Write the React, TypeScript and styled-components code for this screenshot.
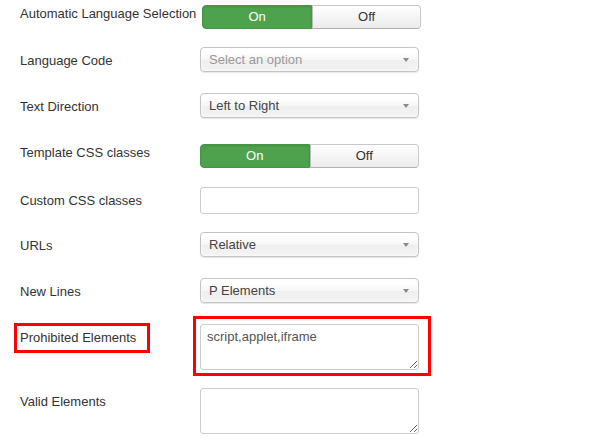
import React from "react";
import styled, { createGlobalStyle } from "styled-components";

const Global = createGlobalStyle`
  html, body { margin: 0; padding: 0; background: #fff; }
  body {
    font-family: "Liberation Sans", Arial, sans-serif;
    font-size: 13px;
    line-height: 18px;
    color: #333;
  }
`;

const Form = styled.div`
  display: flex;
  flex-direction: column;
  padding: 5px 0 0 20px;
`;

const Row = styled.div<{ $mt: number }>`
  display: grid;
  grid-template-columns: minmax(180px, max-content) 219px;
  align-items: start;
  margin-top: ${(p) => p.$mt}px;
`;

const Label = styled.label<{ $toggle?: boolean }>`
  display: block;
  padding-top: ${(p) => (p.$toggle ? 0 : 5)}px;
  padding-right: 6px;
  white-space: nowrap;
  color: #333;
`;

const Highlight = styled.span`
  display: inline-block;
  border: 3px solid #f00;
  padding: 3px 11px 3px 3px;
  margin: -6px 0 -6px -6px;
`;

const Toggle = styled.div`
  display: flex;
  height: 24px;
  width: 219px;
  box-sizing: border-box;
`;

const ToggleBtn = styled.div<{ $active?: boolean; $side: "left" | "right" }>`
  flex: 1;
  display: flex;
  align-items: center;
  justify-content: center;
  box-sizing: border-box;
  font-size: 13px;
  border-radius: ${(p) => (p.$side === "left" ? "4px 0 0 4px" : "0 4px 4px 0")};
  ${(p) =>
    p.$active
      ? `
    color: #fff;
    background: #4ea24e;
    border: 1px solid #459645;
    box-shadow: inset 0 1px 2px rgba(0,0,0,0.12);
  `
      : `
    color: #333;
    background: linear-gradient(#ffffff, #ececec);
    border: 1px solid #c8c8c8;
    border-bottom-color: #b3b3b3;
    border-left-color: #bbb;
  `}
`;

const Select = styled.div<{ $placeholder?: boolean }>`
  position: relative;
  height: 25px;
  box-sizing: border-box;
  border: 1px solid #c4c4c4;
  border-radius: 4px;
  padding: 3px 8px;
  line-height: 18px;
  color: ${(p) => (p.$placeholder ? "#999" : "#444")};
  background: linear-gradient(#ffffff 20%, #f6f6f6 50%, #eeeeee 52%, #f4f4f4 100%);
  box-shadow: inset 0 0 3px #fff, 0 1px 1px rgba(0, 0, 0, 0.1);
`;

const Arrow = styled.svg`
  position: absolute;
  right: 9px;
  top: 10px;
`;

const TextInput = styled.input`
  display: block;
  width: 219px;
  height: 27px;
  box-sizing: border-box;
  border: 1px solid #ccc;
  border-radius: 3px;
  padding: 4px 6px;
  font: inherit;
  color: #555;
  background: #fff;
  outline: none;
`;

const Area = styled.textarea`
  display: block;
  width: 219px;
  height: 46px;
  box-sizing: border-box;
  border: 1px solid #ccc;
  border-radius: 3px;
  padding: 3px 6px;
  margin: 0;
  font-family: "Liberation Sans", Arial, sans-serif;
  font-size: 13px;
  line-height: 18px;
  color: #555;
  background: #fff;
  outline: none;
`;

const AreaFrame = styled.div`
  border: 3px solid #f00;
  padding: 5px 9px 3px 4px;
  margin: -8px -12px -6px -7px;
`;

const SelectBox = ({ value, placeholder }: { value: string; placeholder?: boolean }) => (
  <Select $placeholder={placeholder}>
    {value}
    <Arrow width="6" height="4" viewBox="0 0 6 4">
      <path d="M0 0h6L3 4z" fill="#888" />
    </Arrow>
  </Select>
);

const OnOff = () => (
  <Toggle>
    <ToggleBtn $active $side="left">On</ToggleBtn>
    <ToggleBtn $side="right">Off</ToggleBtn>
  </Toggle>
);

export default function App() {
  return (
    <>
      <Global />
      <Form>
        <Row $mt={0}>
          <Label $toggle>Automatic Language Selection</Label>
          <OnOff />
        </Row>
        <Row $mt={18}>
          <Label>Language Code</Label>
          <SelectBox value="Select an option" placeholder />
        </Row>
        <Row $mt={21}>
          <Label>Text Direction</Label>
          <SelectBox value="Left to Right" />
        </Row>
        <Row $mt={26}>
          <Label $toggle>Template CSS classes</Label>
          <OnOff />
        </Row>
        <Row $mt={19}>
          <Label>Custom CSS classes</Label>
          <TextInput type="text" readOnly />
        </Row>
        <Row $mt={18}>
          <Label>URLs</Label>
          <SelectBox value="Relative" />
        </Row>
        <Row $mt={21}>
          <Label>New Lines</Label>
          <SelectBox value="P Elements" />
        </Row>
        <Row $mt={21}>
          <Label>
            <Highlight>Prohibited Elements</Highlight>
          </Label>
          <AreaFrame>
            <Area readOnly defaultValue="script,applet,iframe" />
          </AreaFrame>
        </Row>
        <Row $mt={18}>
          <Label>Valid Elements</Label>
          <Area readOnly defaultValue="" />
        </Row>
      </Form>
    </>
  );
}
